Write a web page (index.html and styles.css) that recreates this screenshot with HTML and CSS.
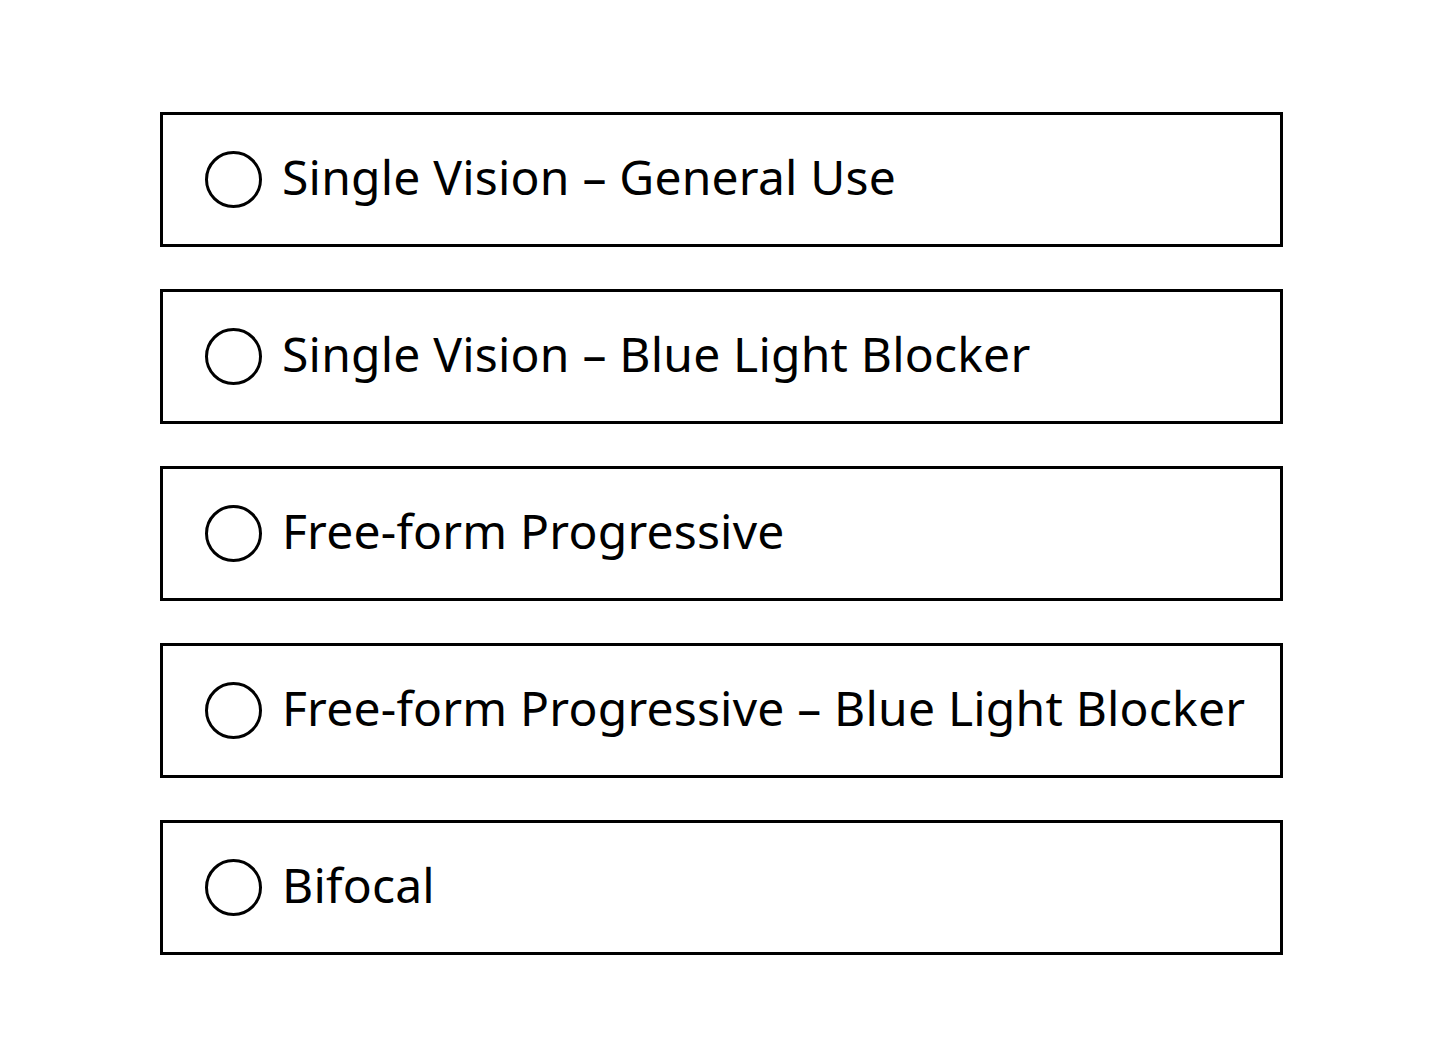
FILE: index.html
```html
<!DOCTYPE html>
<html lang="en">
<head>
  <meta charset="UTF-8">
  <meta name="viewport" content="width=device-width, initial-scale=1.0">
  <title>Lens Type</title>
  <link rel="stylesheet" href="styles.css">
</head>
<body>
  <div class="options">
    <label class="option">
      <span class="radio"></span>
      <span class="label">Single Vision – General Use</span>
    </label>
    <label class="option">
      <span class="radio"></span>
      <span class="label">Single Vision – Blue Light Blocker</span>
    </label>
    <label class="option">
      <span class="radio"></span>
      <span class="label">Free-form Progressive</span>
    </label>
    <label class="option">
      <span class="radio"></span>
      <span class="label">Free-form Progressive – Blue Light Blocker</span>
    </label>
    <label class="option">
      <span class="radio"></span>
      <span class="label">Bifocal</span>
    </label>
  </div>
</body>
</html>
```

FILE: styles.css
```css
body {
  font-family: "Noto Sans", "Open Sans", sans-serif;
  margin: 0;
  padding: 0;
  background-color: #fff;
  color: #000;
}
.options {
  display: flex;
  flex-direction: column;
  gap: 42px;
  width: 1123px;
  margin: 112px 0 0 160px;
}
.option {
  display: flex;
  align-items: center;
  box-sizing: border-box;
  height: 135px;
  padding-left: 42px;
  border: 3px solid #000;
  cursor: pointer;
}
.radio {
  flex: none;
  width: 57px;
  height: 57px;
  box-sizing: border-box;
  border: 3px solid #000;
  border-radius: 50%;
  margin-right: 20px;
}
.label {
  font-size: 48px;
  line-height: 1;
  letter-spacing: 0.2px;
  white-space: nowrap;
  margin-bottom: 6px;
}
```
